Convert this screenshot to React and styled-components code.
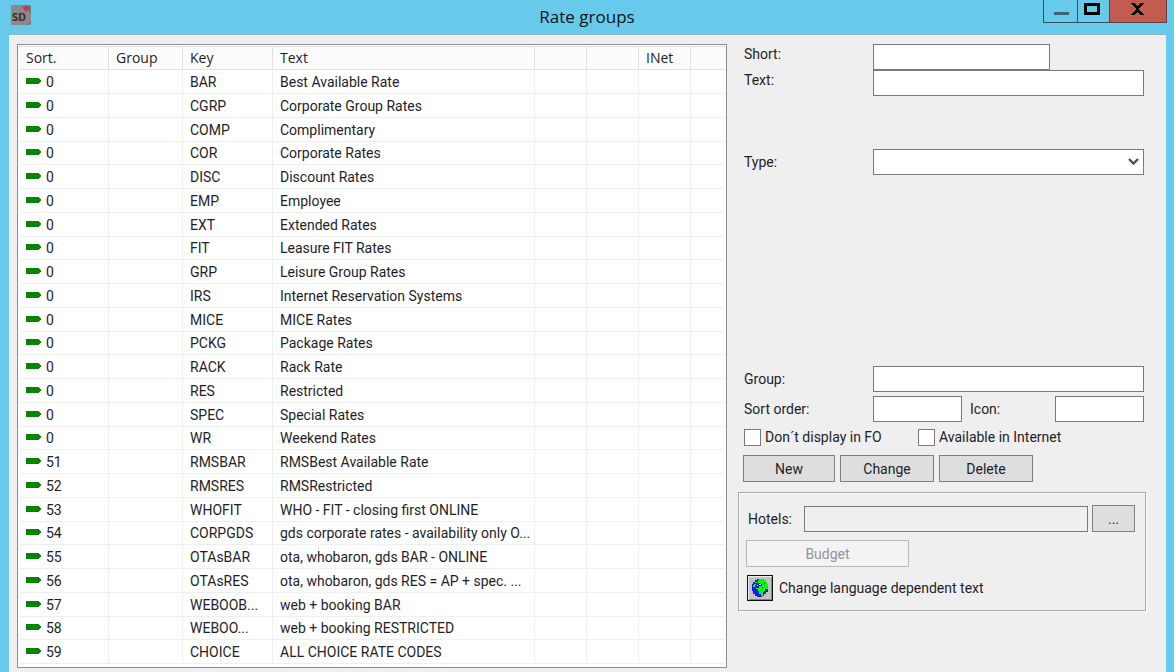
import React from 'react';
import styled, { createGlobalStyle } from 'styled-components';

const GlobalStyle = createGlobalStyle`
  *, *::before, *::after { box-sizing: border-box; }
  body {
    margin: 0;
    background: #67caea;
    color: #1e1e28;
    font-family: Roboto, "Liberation Sans", sans-serif;
    font-size: 14px;
    line-height: 20px;
  }
  button, input, select { font: inherit; color: inherit; margin: 0; border-radius: 0; }
`;

const Window = styled.div`
  min-height: 100vh;
  display: flex;
  flex-direction: column;
  padding: 0 8px 0 9px;
  background: #67caea;
`;

const TitleBar = styled.header`
  display: grid;
  grid-template-columns: 1fr auto 1fr;
  align-items: start;
  height: 35px;
  margin: 0 -1px 0 -2px;
`;

const AppIcon = styled.svg`
  margin: 5px 0 0 4px;
`;

const Title = styled.h1`
  margin: 0;
  color: #10141a;
  font-family: "Open Sans", "Noto Sans", sans-serif;
  font-size: 17px;
  font-weight: 400;
  line-height: 34px;
`;

const Caption = styled.div`
  display: flex;
  justify-content: flex-end;
`;

const CaptionButton = styled.button`
  width: ${(p) => p.$width}px;
  height: 23px;
  padding: 0;
  border: solid #33515e;
  border-width: 0 1px 1px ${(p) => (p.$first ? 1 : 0)}px;
  border-color: ${(p) => (p.$close ? '#5f3f42' : '#33515e')};
  background: ${(p) => (p.$close ? '#c35b50' : 'transparent')};
  svg { display: block; margin: 0 auto; }
`;

const Client = styled.main`
  flex: 1;
  display: grid;
  grid-template-columns: minmax(0, 710fr) minmax(0, 408fr);
  gap: 11px;
  align-items: start;
  padding: 8px 20px 5px 8px;
  border-top: 1px solid #8fb5c4;
  margin-top: -1px;
  background: #efefef;
`;

const ListBox = styled.div`
  padding: 1px 1px 3px;
  margin-top: 1px;
  border: 1px solid #868e96;
  background: #fff;
  overflow: hidden;
`;

const Table = styled.table`
  width: 100%;
  table-layout: fixed;
  border-collapse: separate;
  border-spacing: 0;
`;

const HeadCell = styled.th`
  height: 24px;
  padding: 0 7px;
  border: solid #e0e0e0;
  border-width: 1px 1px 1px 0;
  background: #fcfcfc;
  font-family: "Open Sans", "Noto Sans", sans-serif;
  font-weight: 400;
  text-align: left;
  &:last-child { border-right: 0; }
`;

const Row = styled.tr`
  height: 24px;
  &:nth-child(4n) { height: 23px; }
`;

const Cell = styled.td`
  padding: 0 7px;
  border: solid #efefef;
  border-width: 0 1px 1px 0;
  white-space: nowrap;
  &:last-child { border-right: 0; }
`;

const SortCell = styled.div`
  display: flex;
  gap: 5px;
  svg { margin-top: 6px; }
`;

const Form = styled.form`
  display: flex;
  flex-direction: column;
  margin-top: 1px;
`;

const FieldRow = styled.div`
  display: grid;
  grid-template-columns: 129px minmax(0, 1fr);
  align-items: ${(p) => p.$align || 'start'};
  margin-top: ${(p) => p.$gap || 0}px;
  padding: 0 2px 0 6px;
`;

const Split = styled.div`
  display: flex;
  align-items: center;
  justify-content: space-between;
  label { flex: 1; padding-left: 8px; }
`;

const TextInput = styled.input`
  width: ${(p) => p.$width || '100%'};
  height: 26px;
  padding: 0 4px;
  border: 1px solid #7a7a7a;
  outline: 0;
  background: ${(p) => (p.readOnly ? 'transparent' : '#fff')};
`;

const SelectBox = styled.div`
  position: relative;
  svg { position: absolute; right: 5px; top: 9px; pointer-events: none; }
`;

const Select = styled.select`
  appearance: none;
  display: block;
  width: 100%;
  height: 26px;
  padding: 0 20px 0 4px;
  border: 1px solid #7a7a7a;
  background: #fff;
`;

const Checks = styled.div`
  display: grid;
  grid-template-columns: 174px 1fr;
  margin-top: 5px;
  padding-left: 6px;
`;

const CheckLabel = styled.label`
  display: flex;
  align-items: center;
  gap: 4px;
`;

const Checkbox = styled.input.attrs({ type: 'checkbox' })`
  appearance: none;
  width: 17px;
  height: 17px;
  border: 1px solid #7a7a7a;
  background: #fff;
  &:checked { background: #7a7a7a; box-shadow: inset 0 0 0 3px #fff; }
`;

const Buttons = styled.div`
  display: flex;
  gap: 5px;
  margin-top: 8px;
  padding-left: 5px;
`;

const Button = styled.button`
  flex: none;
  width: ${(p) => p.$width}px;
  height: 27px;
  padding: 0;
  border: 1px solid #7f7f7f;
  background: #dedede;
  &:disabled { border-color: #b5babd; background: #f3f3f3; color: #94949a; }
`;

const GroupBox = styled.section`
  display: flex;
  flex-direction: column;
  align-items: flex-start;
  gap: 8px;
  margin-top: 10px;
  padding: 12px 10px 9px 7px;
  border: 1px solid #acacac;
  box-shadow: inset 1px 1px 0 #fafafa, 1px 1px 0 #fafafa;
`;

const HotelRow = styled.div`
  align-self: stretch;
  display: flex;
  align-items: center;
  gap: 4px;
  label { flex: none; width: 54px; padding-left: 2px; }
`;

const LanguageRow = styled.div`
  display: flex;
  align-items: center;
  gap: 6px;
  padding-left: 1px;
`;

const GlobeButton = styled.button`
  width: 26px;
  height: 26px;
  padding: 0;
  border: 1px solid #111;
  background: #c3c3c3;
  box-shadow: inset 1px 1px 0 #efefef, inset -1px -1px 0 #828282;
  svg { display: block; margin: 0 auto; }
`;

const columns = [
  ['Sort.', 90],
  ['Group', 74],
  ['Key', 90],
  ['Text'],
  ['', 52],
  ['', 52],
  ['INet', 52],
  ['', 34],
];

const rates = [
  [0, 'BAR', 'Best Available Rate'],
  [0, 'CGRP', 'Corporate Group Rates'],
  [0, 'COMP', 'Complimentary'],
  [0, 'COR', 'Corporate Rates'],
  [0, 'DISC', 'Discount Rates'],
  [0, 'EMP', 'Employee'],
  [0, 'EXT', 'Extended Rates'],
  [0, 'FIT', 'Leasure FIT Rates'],
  [0, 'GRP', 'Leisure Group Rates'],
  [0, 'IRS', 'Internet Reservation Systems'],
  [0, 'MICE', 'MICE Rates'],
  [0, 'PCKG', 'Package Rates'],
  [0, 'RACK', 'Rack Rate'],
  [0, 'RES', 'Restricted'],
  [0, 'SPEC', 'Special Rates'],
  [0, 'WR', 'Weekend Rates'],
  [51, 'RMSBAR', 'RMSBest Available Rate'],
  [52, 'RMSRES', 'RMSRestricted'],
  [53, 'WHOFIT', 'WHO - FIT - closing first ONLINE'],
  [54, 'CORPGDS', 'gds corporate rates - availability only O...'],
  [55, 'OTAsBAR', 'ota, whobaron, gds BAR - ONLINE'],
  [56, 'OTAsRES', 'ota, whobaron, gds RES = AP + spec. ...'],
  [57, 'WEBOOB...', 'web + booking BAR'],
  [58, 'WEBOO...', 'web + booking RESTRICTED'],
  [59, 'CHOICE', 'ALL CHOICE RATE CODES'],
];

function Tag() {
  return (
    <svg width="15" height="7" viewBox="0 0 15 7" aria-hidden="true">
      <path d="M0 0h13v1h1v1h1v2h-1v1h-1v1H0z" fill="#068406" />
    </svg>
  );
}

function Logo() {
  return (
    <AppIcon width="20" height="20" viewBox="0 0 20 20" aria-hidden="true">
      <rect width="20" height="20" rx="2" fill="#767174" />
      <path d="M0 20V2Q0 0 2 0H12L20 9V16L16 20z" fill="#8d888b" />
      <text x="1" y="16" fontFamily="Open Sans, sans-serif" fontSize="11" fontWeight="700" fill="#382c2e">SD</text>
      <path d="M11 2h7l-3 5z" fill="#e8234a" />
    </AppIcon>
  );
}

function Globe() {
  return (
    <svg width="18" height="18" viewBox="0 0 18 18" aria-hidden="true">
      <path d="M6 0h7v1h2v2h1v2h1v8h-2v2h-2v2h-2v1H6v-1H4v-2H2v-3H1V5h1V3h2V1h2z" fill="#0a1af0" />
      <path d="M8 0h5v1h2v2h1v2h1v5h-3v2h-1v1h-1v4h-2v-2H8v-3H7v-2H5V9h3V7h3V5H9V4H6V3h1V1h1z" fill="#08f31c" />
      <path d="M2 6h1V5h2v1H4v2H2zM4 3h2v1H4z" fill="#08f31c" />
      <path d="M8 5h2v1H8zM6 6h1v1H6z" fill="#bfe0e0" />
      <path d="M13 4h1v1h-1zM11 8h1v1h-1z" fill="#0a1af0" />
    </svg>
  );
}

export default function App() {
  return (
    <>
      <GlobalStyle />
      <Window>
        <TitleBar>
          <Logo />
          <Title>Rate groups</Title>
          <Caption>
            <CaptionButton $width={35} $first aria-label="Minimize">
              <svg width="16" height="22" viewBox="0 0 16 22"><path d="M1 12h15v3H1z" fill="#3b6676" /></svg>
            </CaptionButton>
            <CaptionButton $width={32} aria-label="Maximize">
              <svg width="19" height="22" viewBox="0 0 19 22"><path d="M0 3h16v12H0zM3 6v6h10V6z" fill="#000" fillRule="evenodd" /></svg>
            </CaptionButton>
            <CaptionButton $width={57} $close aria-label="Close">
              <svg width="14" height="22" viewBox="0 0 14 22"><path d="M0 3h4v1h1v1h1v1h1V5h1V4h1V3h4v1h-1v1h-1v1h-1v1H9v1H8v2h1v1h1v1h1v1h1v1h1v1H9v-1H8v-1H7v-1H6v1H5v1H4v1H0v-1h1v-1h1v-1h1v-1h1v-1h1V8H4V7H3V6H2V5H1V4H0z" fill="#000" /></svg>
            </CaptionButton>
          </Caption>
        </TitleBar>
        <Client>
          <ListBox>
            <Table>
              <colgroup>
                {columns.map(([, width], i) => <col key={i} width={width} />)}
              </colgroup>
              <thead>
                <tr>
                  {columns.map(([name], i) => <HeadCell key={i} scope="col">{name}</HeadCell>)}
                </tr>
              </thead>
              <tbody>
                {rates.map(([sort, key, text]) => (
                  <Row key={key}>
                    <Cell><SortCell><Tag />{sort}</SortCell></Cell>
                    <Cell />
                    <Cell>{key}</Cell>
                    <Cell>{text}</Cell>
                    <Cell />
                    <Cell />
                    <Cell />
                    <Cell />
                  </Row>
                ))}
              </tbody>
            </Table>
          </ListBox>
          <Form onSubmit={(e) => e.preventDefault()}>
            <FieldRow>
              <label htmlFor="short">Short:</label>
              <TextInput id="short" $width="177px" />
            </FieldRow>
            <FieldRow>
              <label htmlFor="text">Text:</label>
              <TextInput id="text" />
            </FieldRow>
            <FieldRow $gap={53} $align="center">
              <label htmlFor="type">Type:</label>
              <SelectBox>
                <Select id="type" />
                <svg width="11" height="8" viewBox="0 0 11 8" aria-hidden="true">
                  <path d="M1 1l4.500 4.500L10 1" fill="none" stroke="#505050" strokeWidth="2.400" />
                </svg>
              </SelectBox>
            </FieldRow>
            <FieldRow $gap={191} $align="center">
              <label htmlFor="group">Group:</label>
              <TextInput id="group" />
            </FieldRow>
            <FieldRow $gap={4} $align="center">
              <label htmlFor="sort">Sort order:</label>
              <Split>
                <TextInput id="sort" $width="89px" />
                <label htmlFor="icon">Icon:</label>
                <TextInput id="icon" $width="89px" />
              </Split>
            </FieldRow>
            <Checks>
              <CheckLabel><Checkbox />Don´t display in FO</CheckLabel>
              <CheckLabel><Checkbox />Available in Internet</CheckLabel>
            </Checks>
            <Buttons>
              <Button type="button" $width={92}>New</Button>
              <Button type="button" $width={94}>Change</Button>
              <Button type="button" $width={94}>Delete</Button>
            </Buttons>
            <GroupBox>
              <HotelRow>
                <label htmlFor="hotels">Hotels:</label>
                <TextInput id="hotels" readOnly />
                <Button type="button" $width={43} aria-label="Choose hotels">...</Button>
              </HotelRow>
              <Button type="button" $width={163} disabled>Budget</Button>
              <LanguageRow>
                <GlobeButton type="button" id="language"><Globe /></GlobeButton>
                <label htmlFor="language">Change language dependent text</label>
              </LanguageRow>
            </GroupBox>
          </Form>
        </Client>
      </Window>
    </>
  );
}
